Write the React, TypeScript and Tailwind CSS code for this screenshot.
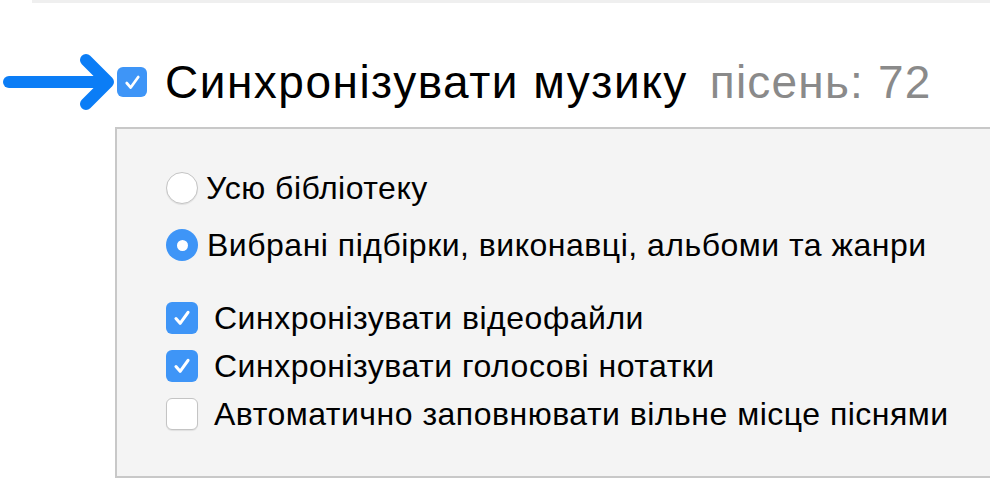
import React from 'react'

const font = { fontFamily: '"Liberation Sans", Arial, sans-serif' }

function Check({ checked }: { checked: boolean }) {
  if (!checked) {
    return (
      <div className="w-[32px] h-[32px] rounded-[6px] bg-white border border-[#c4c4c4] shadow-[0_1px_1px_rgba(0,0,0,0.08)] shrink-0" />
    )
  }
  return (
    <div className="w-[32px] h-[32px] rounded-[6px] bg-[#3e95f7] flex items-center justify-center shrink-0">
      <svg width="22" height="22" viewBox="0 0 20 20">
        <path d="M4.5 10.5 L8.3 14.8 L15.5 4.8" fill="none" stroke="white" strokeWidth="2.8" strokeLinecap="round" strokeLinejoin="round" />
      </svg>
    </div>
  )
}

function Radio({ selected }: { selected: boolean }) {
  if (selected) {
    return (
      <div className="w-[32px] h-[32px] rounded-full bg-[#3e95f7] flex items-center justify-center shrink-0">
        <div className="w-[11px] h-[11px] rounded-full bg-white" />
      </div>
    )
  }
  return (
    <div className="w-[32px] h-[32px] rounded-full bg-white border border-[#c4c4c4] shadow-[0_1px_1px_rgba(0,0,0,0.08)] shrink-0" />
  )
}

export default function App() {
  const options = [
    { label: 'Синхронізувати відеофайли', checked: true },
    { label: 'Синхронізувати голосові нотатки', checked: true },
    { label: 'Автоматично заповнювати вільне місце піснями', checked: false },
  ]

  return (
    <div className="w-[990px] h-[500px] bg-white overflow-hidden" style={font}>
      <div className="ml-[32px] h-[3px] bg-[#efefef]" />

      <div className="flex items-center mt-[49px] h-[60px]">
        <svg width="116" height="60" viewBox="0 0 116 60" className="shrink-0">
          <path d="M9 30 H104" stroke="#0b7df6" strokeWidth="12" strokeLinecap="round" />
          <path d="M86 8 L108 30 L86 52" fill="none" stroke="#0b7df6" strokeWidth="12" strokeLinecap="round" strokeLinejoin="round" />
        </svg>
        <div className="ml-[1px]">
          <div className="w-[30px] h-[30px] rounded-[6px] bg-[#3e95f7] flex items-center justify-center">
            <svg width="21" height="21" viewBox="0 0 20 20">
              <path d="M4.5 10.5 L8.3 14.8 L15.5 4.8" fill="none" stroke="white" strokeWidth="2.6" strokeLinecap="round" strokeLinejoin="round" />
            </svg>
          </div>
        </div>
        <div className="ml-[18px] text-[46px] leading-none tracking-[1.5px] text-black whitespace-nowrap">
          Синхронізувати музику
          <span className="ml-[22px] text-[#8a8a8a] tracking-[1.2px]">пісень: 72</span>
        </div>
      </div>

      <div className="ml-[115px] mt-[15px] h-[351px] bg-[#f4f4f4] border-l-2 border-y-2 border-[#c8c8c8] pl-[49px] pt-[43px]">
        <div className="flex items-center h-[32px]">
          <Radio selected={false} />
          <span className="ml-[8px] text-[32px] tracking-[0.5px] text-black whitespace-nowrap">Усю бібліотеку</span>
        </div>
        <div className="flex items-center h-[32px] mt-[25px]">
          <Radio selected={true} />
          <span className="ml-[9px] text-[32px] tracking-[0.5px] text-black whitespace-nowrap">
            Вибрані підбірки, виконавці, альбоми та жанри
          </span>
        </div>
        <div className="mt-[41px] flex flex-col gap-[16px]">
          {options.map((o) => (
            <div key={o.label} className="flex items-center h-[32px]">
              <Check checked={o.checked} />
              <span className="ml-[16px] text-[32px] tracking-[0.5px] text-black whitespace-nowrap">{o.label}</span>
            </div>
          ))}
        </div>
      </div>
    </div>
  )
}
